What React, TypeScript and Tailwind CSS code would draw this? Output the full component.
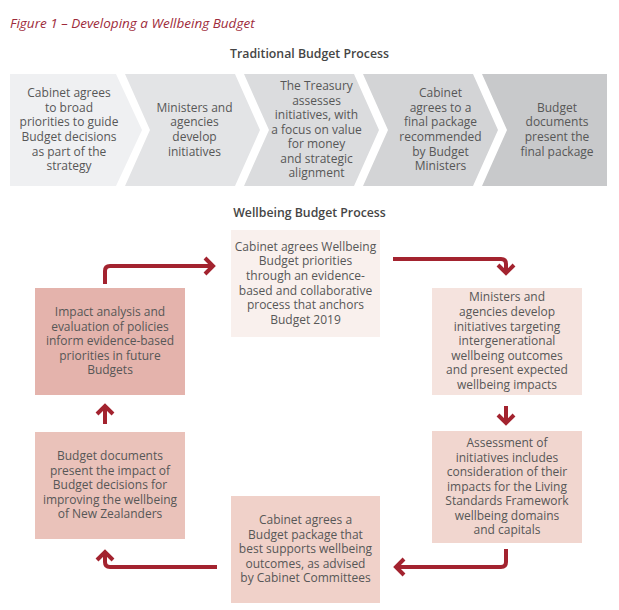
import React from 'react'

type Chevron = { lines: string[]; cls: string }

const chevrons: Chevron[] = [
  {
    lines: ['Cabinet agrees', 'to broad', 'priorities to guide', 'Budget decisions', 'as part of the', 'strategy'],
    cls: 'w-[132px] bg-[#eff0f2] pr-[14px] [clip-path:polygon(0_0,106px_0,132px_50%,106px_100%,0_100%)]',
  },
  {
    lines: ['Ministers and', 'agencies', 'develop', 'initiatives'],
    cls: 'w-[135px] -ml-[17px] bg-[#e3e4e6] pl-[4px] [clip-path:polygon(0_0,110px_0,135px_50%,110px_100%,0_100%,25px_50%)]',
  },
  {
    lines: ['The Treasury', 'assesses', 'initiatives, with', 'a focus on value', 'for money', 'and strategic', 'alignment'],
    cls: 'w-[135px] -ml-[16px] bg-[#dbdcde] pl-[10px] [clip-path:polygon(0_0,110px_0,135px_50%,110px_100%,0_100%,25px_50%)]',
  },
  {
    lines: ['Cabinet', 'agrees to a', 'final package', 'recommended', 'by Budget', 'Ministers'],
    cls: 'w-[135px] -ml-[16px] bg-[#d3d4d6] pl-[20px] [clip-path:polygon(0_0,110px_0,135px_50%,110px_100%,0_100%,25px_50%)]',
  },
  {
    lines: ['Budget', 'documents', 'present the', 'final package'],
    cls: 'flex-1 -ml-[16px] bg-[#c8c9cb] pl-[25px] [clip-path:polygon(0_0,100%_0,100%_100%,0_100%,25px_50%)]',
  },
]

function Box({ lines, cls }: { lines: string[]; cls: string }) {
  return (
    <div className={`flex items-center justify-center text-center text-[12px] leading-[14.6px] text-[#575757] ${cls}`}>
      <p>
        {lines.map((l, i) => (
          <React.Fragment key={i}>
            {i > 0 && <br />}
            {l}
          </React.Fragment>
        ))}
      </p>
    </div>
  )
}

export default function App() {
  return (
    <div className="w-[619px] h-[610px] bg-white overflow-hidden font-['Open_Sans',sans-serif]">
      <p className="pl-[10px] pt-[13px] italic text-[13.5px] leading-[20px] text-[#9e2b3b]">
        Figure 1 – Developing a Wellbeing Budget
      </p>

      <h2 className="mt-[12px] text-center text-[12.3px] leading-[18px] font-semibold text-[#454545]">
        Traditional Budget Process
      </h2>

      {/* chevron row */}
      <div className="ml-[10px] mt-[11px] w-[597px] h-[112px] flex">
        {chevrons.map((c, i) => (
          <Box key={i} lines={c.lines} cls={`h-full shrink-0 ${c.cls}`} />
        ))}
      </div>

      <h2 className="mt-[18px] text-center text-[12.3px] leading-[18px] font-semibold text-[#454545]">
        Wellbeing Budget Process
      </h2>

      {/* cycle diagram */}
      <div className="relative h-[388px]">
        <div className="flex pl-[35px]">
          <div className="w-[150px] flex flex-col">
            <Box
              cls="mt-[66px] h-[107px] bg-[#e4b3ac]"
              lines={['Impact analysis and', 'evaluation of policies', 'inform evidence-based', 'priorities in future', 'Budgets']}
            />
            <Box
              cls="mt-[37px] h-[107px] bg-[#eac2ba]"
              lines={['Budget documents', 'present the impact of', 'Budget decisions for', 'improving the wellbeing', 'of New Zealanders']}
            />
          </div>
          <div className="ml-[46px] w-[149px] flex flex-col">
            <Box
              cls="mt-[8px] h-[107px] bg-[#f9f0ed]"
              lines={['Cabinet agrees Wellbeing', 'Budget priorities', 'through an evidence-', 'based and collaborative', 'process that anchors', 'Budget 2019']}
            />
            <Box
              cls="mt-[159px] h-[107px] bg-[#f0d1c9]"
              lines={['Cabinet agrees a', 'Budget package that', 'best supports wellbeing', 'outcomes, as advised', 'by Cabinet Committees']}
            />
          </div>
          <div className="ml-[52px] w-[150px] flex flex-col">
            <Box
              cls="mt-[66px] h-[107px] bg-[#f5e3de]"
              lines={['Ministers and', 'agencies develop', 'initiatives targeting', 'intergenerational', 'wellbeing outcomes', 'and present expected', 'wellbeing impacts']}
            />
            <Box
              cls="mt-[36px] h-[112px] bg-[#f1d6cf]"
              lines={['Assessment of', 'initiatives includes', 'consideration of their', 'impacts for the Living', 'Standards Framework', 'wellbeing domains', 'and capitals']}
            />
          </div>
        </div>

        <svg
          className="absolute inset-0 pointer-events-none"
          width="619"
          height="388"
          viewBox="0 222 619 388"
          fill="none"
          stroke="#a3232f"
          strokeWidth="4"
          strokeLinecap="butt"
          strokeLinejoin="miter"
        >
          {/* left box -> top box */}
          <path d="M105 284 V271 Q105 266 110 266 H213" />
          <polyline points="205,258 213,266 205,274" />
          {/* top box -> right box */}
          <path d="M393 259 H501 Q506 259 506 264 V271" />
          <polyline points="498,265 506,273 514,265" />
          {/* right top -> right bottom */}
          <path d="M506 406 V422" />
          <polyline points="498,415 506,423 514,415" />
          {/* right bottom -> bottom box */}
          <path d="M506 549 V562 Q506 567 501 567 H397" />
          <polyline points="404,559 396,567 404,575" />
          {/* bottom box -> left bottom */}
          <path d="M217 567 H110 Q105 567 105 562 V553" />
          <polyline points="97,560 105,552 113,560" />
          {/* left bottom -> left top */}
          <path d="M105 424 V408" />
          <polyline points="97,414 105,406 113,414" />
        </svg>
      </div>
    </div>
  )
}
